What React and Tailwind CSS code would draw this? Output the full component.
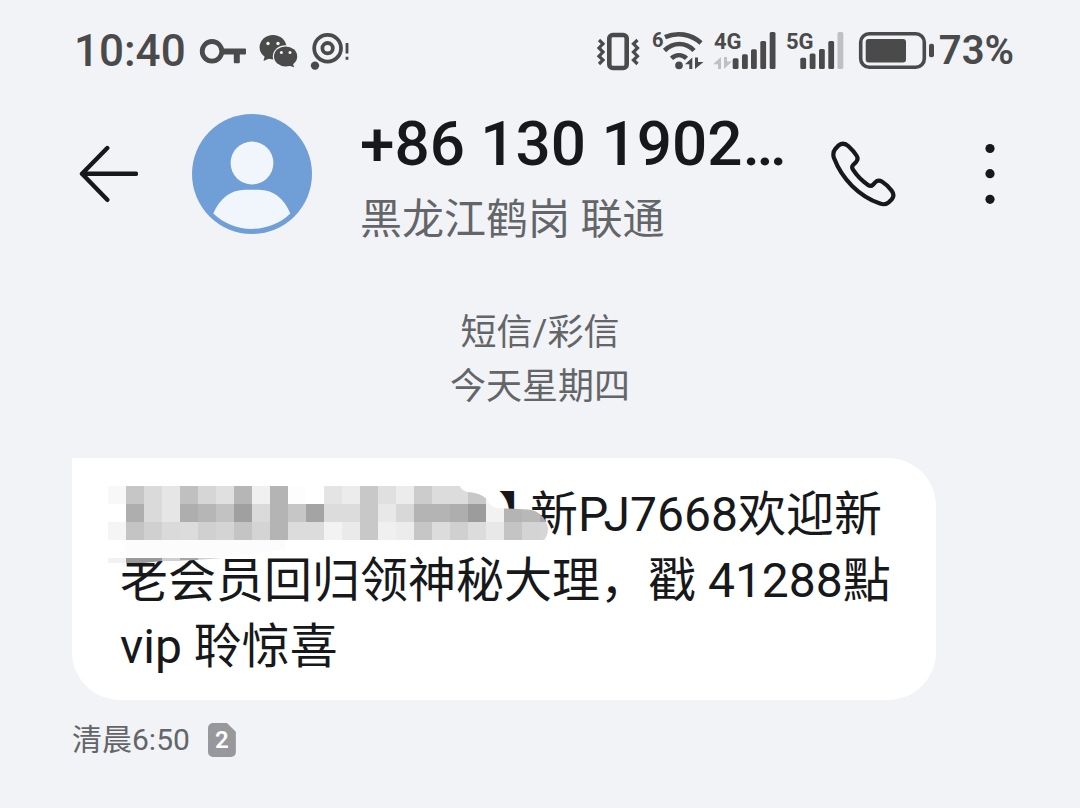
import React from "react";

const MOSAIC = [
  ["f8", "c6", "da", "e6", "c0", "d6", "e0", "b6", "f0", "b4", "fd", "ff", "e4", "ec", "c8", "e0", "ec", "cc", "dc", "dc", "c8", "f4", "ff", "ff", "ff"],
  ["ff", "ae", "da", "e6", "ae", "b6", "c2", "a0", "da", "b4", "c6", "a4", "dc", "dc", "c8", "e8", "d8", "b4", "b4", "ae", "9c", "f2", "b4", "b8", "a8"],
  ["f5", "c4", "d0", "da", "dc", "d0", "d4", "c4", "d4", "b4", "dc", "dc", "f3", "ea", "c8", "f0", "ec", "c6", "dc", "d0", "dc", "e8", "c4", "d4", "d6"],
];

function KeyIcon() {
  return (
    <svg width="48" height="40" viewBox="197 31 48 40" fill="#4a4a4b" aria-hidden="true">
      <circle cx="211" cy="51.3" r="9.8" fill="none" stroke="#4a4a4b" strokeWidth="4.8" />
      <path d="M222 48.6h22a1 1 0 0 1 1 1v3.8a1 1 0 0 1-1 1h-5.2v7.8a1 1 0 0 1-1 1h-4a1 1 0 0 1-1-1v-7.8H222z" />
    </svg>
  );
}

function ChatIcon() {
  return (
    <svg width="40" height="40" viewBox="257 31 40 40" fill="#4a4a4b" aria-hidden="true">
      <ellipse cx="272" cy="47.2" rx="13.4" ry="12.2" />
      <path d="M264 55l-1.5 6 7-3z" />
      <ellipse cx="284.6" cy="56.4" rx="12.8" ry="11.2" fill="#f1f3f7" />
      <ellipse cx="284.6" cy="56.4" rx="11.6" ry="10" />
      <path d="M286 65l7 2.2-1.4-5.2z" />
      <g fill="#f1f3f7">
        <circle cx="267" cy="43.5" r="1.7" />
        <circle cx="277" cy="43.5" r="1.7" />
        <circle cx="280.4" cy="52.6" r="1.5" />
        <circle cx="289" cy="52.6" r="1.5" />
      </g>
    </svg>
  );
}

function LocatorIcon() {
  return (
    <svg width="40" height="40" viewBox="309 31 40 40" fill="none" stroke="#4a4a4b" aria-hidden="true">
      <circle cx="326.6" cy="48.2" r="13.4" strokeWidth="3.8" />
      <circle cx="326.6" cy="48.2" r="5.2" strokeWidth="3.8" />
      <circle cx="314" cy="65.6" r="4.2" fill="#4a4a4b" stroke="none" />
      <path d="M346 43v10.5M346 56.8v3" strokeWidth="2.8" />
    </svg>
  );
}

function VibrateIcon() {
  return (
    <svg width="52" height="48" viewBox="592 27 52 48" fill="none" stroke="#4a4a4b" aria-hidden="true">
      <rect x="609.3" y="35" width="17.4" height="33" rx="3.5" strokeWidth="4.6" />
      <path d="M599 40l4 3.8-4 4.2 4 4-4 4.2 4 3.8-4 4M637.500 40l-4 3.8 4 4.2-4 4 4 4.2-4 3.8 4 4" strokeWidth="3.2" />
    </svg>
  );
}

function WifiIcon() {
  return (
    <svg width="52" height="48" viewBox="652 27 52 48" fill="#4a4a4b" aria-hidden="true">
      <text x="652" y="46.500" fontFamily="Roboto, sans-serif" fontSize="20" fontWeight="700">6</text>
      <g fill="none" stroke="#4a4a4b" strokeWidth="4.6">
        <path d="M665 37.2c12-5.400 26-3.400 36 5.800" />
        <path d="M664.500 50.500c9-8.600 21-8.600 29.500 0" />
        <path d="M671.500 58.400c4.500-4.200 10.500-4.200 15 0" />
      </g>
      <circle cx="679" cy="65.400" r="3.800" />
      <path d="M692.300 57.500v11.500h-3v-4.800h-4.300zM695 57.500h3v4.500h5.500l-8.500 7z" />
    </svg>
  );
}

function SignalBars({ left, label, roaming, bars }) {
  return (
    <svg width="64" height="48" viewBox={`${left} 27 64 48`} fill="#4a4a4b" aria-hidden="true">
      <text x={left + 2} y="49" fontFamily="Roboto, sans-serif" fontSize="22" fontWeight="700">{label}</text>
      {roaming && <path d="M721 57v12h-3v-4.800h-5zM724 57h3v4.500h5l-8 7.500z" fill="#bfc0c3" />}
      {bars.map(([x, y, color]) => (
        <rect key={x} x={x} y={y} width="5.800" height={69 - y} rx="1.500" fill={color || "#4a4a4b"} />
      ))}
    </svg>
  );
}

function BatteryIcon() {
  return (
    <svg width="80" height="48" viewBox="856 27 80 48" fill="#4a4a4b" aria-hidden="true">
      <rect x="860.700" y="33.800" width="63.600" height="33.400" rx="8.500" fill="none" stroke="#4a4a4b" strokeWidth="3.600" />
      <rect x="865.700" y="39" width="40.300" height="23.500" rx="3" />
      <rect x="929" y="43.700" width="5" height="13.500" rx="2" />
    </svg>
  );
}

function StatusBar() {
  return (
    <div className="flex items-center justify-between pt-6 pr-[66px] pl-[74px] text-[#4a4a4b]">
      <div className="flex items-center gap-3">
        <span className="text-[44px] leading-[54px] font-medium">10:40</span>
        <KeyIcon />
        <ChatIcon />
        <LocatorIcon />
      </div>
      <div className="flex items-center gap-2">
        <VibrateIcon />
        <WifiIcon />
        <SignalBars left={712} label="4G" roaming bars={[[732.7, 58.3], [742, 54.3], [751, 49.3], [760.3, 41], [769.7, 32]]} />
        <SignalBars left={784} label="5G" bars={[[800.3, 57.7], [809.7, 53.5], [819, 49], [828.3, 41], [837.5, 32, "#bfc0c3"]]} />
        <div className="flex items-center gap-[3px]">
          <BatteryIcon />
          <span className="text-[40px] leading-[54px] font-semibold">73%</span>
        </div>
      </div>
    </div>
  );
}

function Header() {
  return (
    <header className="mt-[26px] flex items-center pr-[70px] pl-[78px]">
      <button type="button" aria-label="返回" className="shrink-0">
        <svg width="60" height="60" viewBox="78 144 60 60" fill="none" stroke="#17181a" strokeWidth="4.400" strokeLinecap="round" strokeLinejoin="round">
          <path d="M107.300 148L82 173.800l25.300 26M82 173.800h54" />
        </svg>
      </button>
      <svg className="ml-[54px] shrink-0" width="120" height="120" viewBox="192 114 120 120" role="img" aria-label="联系人">
        <circle cx="252" cy="174" r="60" fill="#6f9fd6" />
        <circle cx="252" cy="163" r="21.400" fill="#f1f6fd" />
        <path d="M213.300 213.500C220 198 231 189.800 245 189.800h14c14 0 25 8.200 31.300 23.700-21 20.500-56 20.500-77 0z" fill="#f1f6fd" />
      </svg>
      <div className="ml-12 flex min-w-0 flex-1 flex-col gap-3">
        <h1 className="text-[62px] leading-[80px] font-medium whitespace-nowrap text-[#17181a]">+86 130 1902…</h1>
        <p className="text-[42px] leading-[48px] whitespace-nowrap text-[#646568]">黑龙江鹤岗 联通</p>
      </div>
      <button type="button" aria-label="拨打电话" className="shrink-0">
        <svg width="66" height="66" viewBox="831 141 66 66" fill="none" stroke="#17181a" strokeWidth="4.200" strokeLinejoin="round">
          <path d="M838.500 145.500c3.500-2.600 7-2 10 .8 3 2.800 6 6 8 9.200 1.800 2.800 1.300 4.900-.8 6.900l-2.400 2.300c-1.500 1.500-1.500 3.100-.3 5 4 6.200 9 11.200 15 15.300 1.900 1.300 3.600 1.200 5-.3l2.200-2.300c2-2.100 4.200-2.300 7-.6 3.600 2.200 6.500 5.200 9.200 8.500 2.500 3.100 2.800 6.200.2 9.200l-2.600 2.600c-2.600 2.300-5.600 2.700-9 1.500-21-7.500-38-24.500-46-45.600-1.200-3.400-.8-6.500 1.500-9.300z" />
        </svg>
      </button>
      <button type="button" aria-label="更多" className="ml-[73px] shrink-0">
        <svg width="40" height="66" viewBox="970 141 40 66" fill="#17181a">
          <circle cx="990" cy="148.500" r="4.600" />
          <circle cx="990" cy="173.700" r="4.600" />
          <circle cx="990" cy="199.300" r="4.600" />
        </svg>
      </button>
    </header>
  );
}

function Redaction() {
  return (
    <svg className="absolute top-0 left-0" width="490" height="120" viewBox="72 458 490 120" aria-hidden="true">
      <defs>
        <clipPath id="smear">
          <path d="M100 480H458C460 488 462 491 468 492C480 493 486 497 488 501C490 505 493 508 497 508L528 509.500C540 511 546 518 548 528C548 534 546 538 544 540H100z" />
        </clipPath>
      </defs>
      <path d="M108 540H545L400 548L224 558L108 563z" fill="#fff" />
      <path d="M126 540H285V550L224 557H126z" fill="#fcfcfc" />
      <path d="M108 558H126V563H108z" fill="#f2f2f2" />
      <path d="M126 558H162V561L144 563H126z" fill="#999" />
      <path d="M162 558H224L180 561H162z" fill="#cfcfcf" />
      <path d="M180 558H198V560H180z" fill="#a6a6a6" />
      <g clipPath="url(#smear)" shapeRendering="crispEdges">
        {MOSAIC.map((row, r) =>
          row.map((v, c) => (
            <rect key={`${r}-${c}`} x={108 + c * 18} y={486 + r * 18} width="18" height="18" fill={`#${v}${v}${v}`} />
          ))
        )}
      </g>
    </svg>
  );
}

export default function App() {
  return (
    <div className="min-h-screen bg-[#f1f3f7] pb-12 font-['Roboto','Noto_Sans_CJK_SC',sans-serif]" lang="zh-CN">
      <StatusBar />
      <Header />
      <main>
        <div className="mt-[62px] text-center text-[36px] leading-[54px] text-[#646568]">
          <p>短信/彩信</p>
          <p>今天星期四</p>
        </div>
        <article className="mt-11 mr-36 ml-[72px]">
          <div className="relative rounded-[48px] rounded-tl-none bg-white px-12 pt-6 pb-5 text-[48px] leading-[66px] whitespace-nowrap text-[#17181a]">
            <p className="flex gap-2 pl-[378px]">
              <span className="[font-feature-settings:'halt']">】</span>
              <span>新PJ7668欢迎新</span>
            </p>
            <p>老会员回归领神秘大理，戳 41288點</p>
            <p>vip 聆惊喜</p>
            <Redaction />
          </div>
          <footer className="mt-5 flex items-center gap-[18px] text-[30px] leading-[40px] text-[#646568]">
            <time>清晨6:50</time>
            <span className="flex h-[34px] w-7 items-center justify-center rounded-[5px] bg-[#97989b] text-[24px] leading-none font-semibold text-white [clip-path:polygon(0_0,68%_0,100%_26%,100%_100%,0_100%)]">2</span>
          </footer>
        </article>
      </main>
    </div>
  );
}
